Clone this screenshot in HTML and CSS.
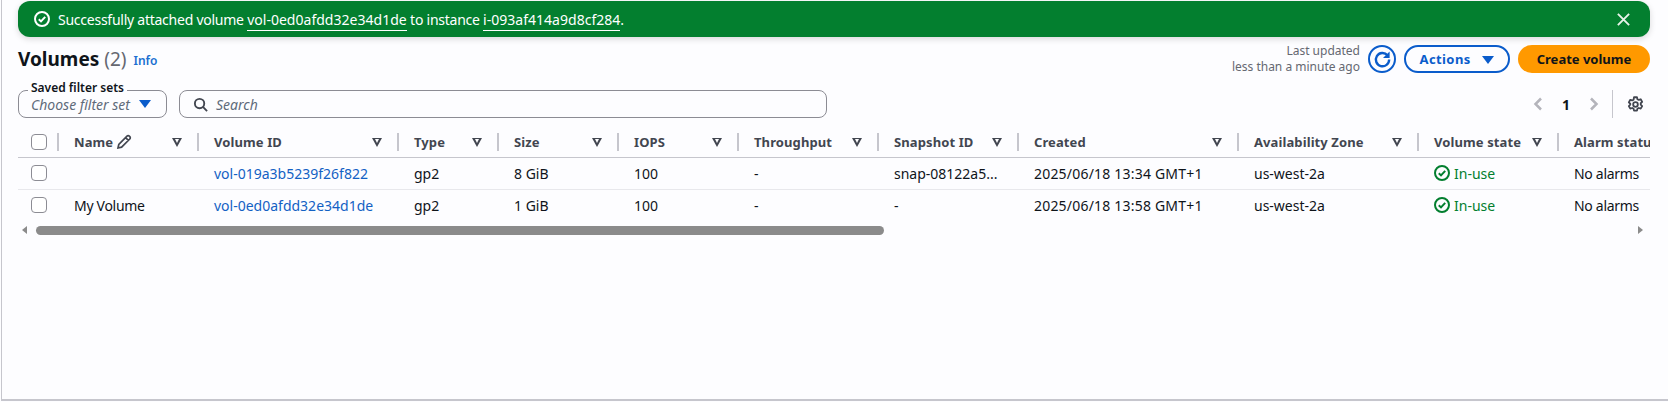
FILE: index.html
```html
<!DOCTYPE html>
<html lang="en">

<head>
    <meta charset="UTF-8">
    <meta name="viewport" content="width=device-width, initial-scale=1.0">
    <title>Volumes</title>
    <link rel="stylesheet" href="styles.css">
</head>

<body>
    <div class="page">
        <!-- Flash message -->
        <div class="flash">
            <svg class="flash-icon" viewBox="0 0 16 16"><circle cx="8" cy="8" r="7"/><path d="M4.8 8.2l2.2 2.2 4.2-4.6"/></svg>
            <span class="flash-text">Successfully attached volume <a class="flash-link">vol-0ed0afdd32e34d1de</a> to instance <a class="flash-link">i-093af414a9d8cf284</a>.</span>
            <svg class="flash-close" viewBox="0 0 16 16"><path d="M2 2l12 12M14 2L2 14"/></svg>
        </div>

        <!-- Header -->
        <div class="header">
            <div class="title">
                <h1>Volumes <span class="count">(2)</span></h1>
                <a class="info">Info</a>
            </div>
            <div class="actions">
                <div class="updated">Last updated<br>less than a minute ago</div>
                <button class="btn-refresh">
                    <svg viewBox="0 0 16 16"><path d="M12.2 4.4A5.6 5.6 0 1 0 13.6 8"/><path class="fill" d="M14 1.2v5.6H8.4z"/></svg>
                </button>
                <button class="btn-actions">Actions <span class="caret"></span></button>
                <button class="btn-create">Create volume</button>
            </div>
        </div>

        <!-- Filter -->
        <div class="filters">
            <div class="select">
                <span class="select-label">Saved filter sets</span>
                <span>Choose filter set</span>
                <span class="caret"></span>
            </div>
            <div class="search">
                <svg viewBox="0 0 16 16"><circle cx="7" cy="7" r="5"/><path d="M10.6 10.6L15 15"/></svg>
                <span>Search</span>
            </div>
            <div class="pager">
                <svg viewBox="0 0 16 16"><path d="M11 2.5L5.5 8l5.5 5.5"/></svg>
                <b>1</b>
                <svg viewBox="0 0 16 16"><path d="M5 2.5L10.5 8 5 13.500"/></svg>
                <span class="pager-line"></span>
                <svg class="gear" viewBox="0 0 16 16"><path d="M6.600 1.200h2.800l.4 1.800 1.300.7 1.800-.6 1.400 2.400-1.400 1.300v1.400l1.400 1.300-1.400 2.400-1.800-.6-1.300.7-.4 1.800H6.600l-.4-1.800-1.300-.7-1.800.6-1.400-2.400 1.400-1.300V7.300L1.700 6l1.400-2.400 1.800.6 1.300-.7z"/><circle cx="8" cy="8" r="2.200"/></svg>
            </div>
        </div>

        <!-- Table -->
        <div class="table-wrap">
            <table>
                <thead>
                    <tr>
                        <th class="col-check"><span class="check"></span></th>
                        <th class="col-name"><div class="th">Name <svg class="pencil" viewBox="0 0 16 16"><path d="M2 14l.8-3.600L11 2.200a1.600 1.600 0 0 1 2.300 0l.5.500a1.600 1.600 0 0 1 0 2.300L5.600 13.200z M9.600 3.600l2.800 2.800"/></svg><i class="sort"></i></div></th>
                        <th class="col-id"><div class="th">Volume ID<i class="sort"></i></div></th>
                        <th class="col-type"><div class="th">Type<i class="sort"></i></div></th>
                        <th class="col-size"><div class="th">Size<i class="sort"></i></div></th>
                        <th class="col-iops"><div class="th">IOPS<i class="sort"></i></div></th>
                        <th class="col-through"><div class="th">Throughput<i class="sort"></i></div></th>
                        <th class="col-snap"><div class="th">Snapshot ID<i class="sort"></i></div></th>
                        <th class="col-created"><div class="th">Created<i class="sort"></i></div></th>
                        <th class="col-zone"><div class="th">Availability Zone<i class="sort"></i></div></th>
                        <th class="col-state"><div class="th">Volume state<i class="sort"></i></div></th>
                        <th class="col-alarm"><div class="th">Alarm status</div></th>
                    </tr>
                </thead>
                <tbody>
                    <tr>
                        <td class="col-check"><span class="check"></span></td>
                        <td></td>
                        <td><a class="link">vol-019a3b5239f26f822</a></td>
                        <td>gp2</td>
                        <td>8 GiB</td>
                        <td>100</td>
                        <td>-</td>
                        <td>snap-08122a5...</td>
                        <td class="date">2025/06/18 13:34 GMT+1</td>
                        <td>us-west-2a</td>
                        <td><span class="state"><svg viewBox="0 0 16 16"><circle cx="8" cy="8" r="7"/><path d="M4.8 8.2l2.2 2.2 4.2-4.6"/></svg>In-use</span></td>
                        <td class="words">No alarms</td>
                    </tr>
                    <tr>
                        <td class="col-check"><span class="check"></span></td>
                        <td class="words">My Volume</td>
                        <td><a class="link">vol-0ed0afdd32e34d1de</a></td>
                        <td>gp2</td>
                        <td>1 GiB</td>
                        <td>100</td>
                        <td>-</td>
                        <td>-</td>
                        <td class="date">2025/06/18 13:58 GMT+1</td>
                        <td>us-west-2a</td>
                        <td><span class="state"><svg viewBox="0 0 16 16"><circle cx="8" cy="8" r="7"/><path d="M4.8 8.2l2.2 2.2 4.2-4.6"/></svg>In-use</span></td>
                        <td class="words">No alarms</td>
                    </tr>
                </tbody>
            </table>
        </div>

        <!-- Scrollbar -->
        <div class="scrollbar">
            <span class="arrow-left"></span>
            <div class="track"><div class="thumb"></div></div>
            <span class="arrow-right"></span>
        </div>
    </div>
</body>

</html>
```

FILE: styles.css
```css
* {
    margin: 0;
    padding: 0;
    box-sizing: border-box;
}

html, body {
    height: 100%;
    overflow: hidden;
    font-family: "Noto Sans", Arial, sans-serif;
    font-size: 14px;
    color: #0f141a;
    background: #fdfdff;
}

svg {
    fill: none;
    stroke: currentColor;
    stroke-width: 2;
    flex: none;
}

.page {
    height: 401px;
    margin-left: 1px;
    padding: 1px 18px 0 16px;
    border-left: 1px solid #c6c6cd;
    border-bottom: 2px solid #c6c6cd;
}

/* Flash message */
.flash {
    display: flex;
    align-items: center;
    height: 36px;
    padding: 0 19px 0 16px;
    border-radius: 12px;
    background: #037f2f;
    color: #fff;
    box-shadow: 0 2px 6px rgba(0, 0, 0, 0.15);
}

.flash-icon {
    width: 16px;
    height: 16px;
    margin-right: 8px;
}

.flash-text {
    flex: 1;
    letter-spacing: -0.25px;
}

.flash-link {
    padding-bottom: 1px;
    border-bottom: 1px solid #fff;
    letter-spacing: 0.02px;
}

.flash-close {
    width: 15px;
    height: 15px;
    color: #e8f3ea;
}

/* Header */
.header {
    display: flex;
    justify-content: space-between;
    height: 28px;
    margin-top: 8px;
}

.title {
    display: flex;
    align-items: center;
    gap: 7px;
}

h1 {
    font-size: 19px;
    font-weight: 700;
    line-height: 28px;
}

.count {
    font-weight: 400;
    color: #656871;
}

.info {
    margin-top: 3px;
    font-size: 12px;
    font-weight: 600;
    color: #1a6fd1;
}

.actions {
    display: flex;
    align-items: center;
    gap: 8px;
}

.updated {
    font-size: 12px;
    line-height: 16px;
    text-align: right;
    color: #656871;
}

button {
    height: 28px;
    border-radius: 14px;
    font-family: inherit;
    font-size: 13px;
    font-weight: 700;
}

.btn-refresh {
    width: 28px;
    border: 2px solid #0a5ccb;
    background: none;
    color: #0a5ccb;
    display: flex;
    align-items: center;
    justify-content: center;
}

.btn-refresh svg {
    width: 19px;
    height: 19px;
}

.btn-refresh .fill {
    fill: currentColor;
    stroke: none;
}

.btn-actions {
    width: 106px;
    border: 2px solid #0a5ccb;
    background: none;
    color: #0a5ccb;
    letter-spacing: 0.4px;
}

.btn-actions .caret {
    margin-left: 8px;
}

.btn-create {
    width: 132px;
    border: 0;
    background: #ff9900;
    color: #0f141a;
}

.caret {
    display: inline-block;
    width: 0;
    height: 0;
    border-left: 6px solid transparent;
    border-right: 6px solid transparent;
    border-top: 8px solid #0a5ccb;
}

/* Filter */
.filters {
    display: flex;
    align-items: center;
    height: 28px;
    margin-top: 17px;
}

.select {
    position: relative;
    display: flex;
    align-items: center;
    justify-content: space-between;
    width: 149px;
    height: 28px;
    padding: 0 15px 0 12px;
    border: 1px solid #8c8c94;
    border-radius: 8px;
    font-style: italic;
    color: #5f6b7a;
}

.select-label {
    position: absolute;
    top: -11px;
    left: 9px;
    padding: 0 3px;
    background: #fdfdff;
    font-size: 12px;
    font-style: normal;
    font-weight: 600;
    line-height: 16px;
    color: #0f141a;
}

.search {
    display: flex;
    align-items: center;
    gap: 8px;
    width: 648px;
    height: 28px;
    margin-left: 12px;
    padding-left: 13px;
    border: 1px solid #8c8c94;
    border-radius: 8px;
    font-style: italic;
    color: #5f6b7a;
}

.search svg {
    width: 15px;
    height: 15px;
    color: #424650;
}

.pager {
    display: flex;
    align-items: center;
    height: 28px;
    margin-left: auto;
    color: #b4b4bb;
}

.pager svg {
    width: 16px;
    height: 16px;
    stroke-width: 2.500;
}

.pager b {
    margin: 0 16px;
    font-size: 14px;
    color: #0f141a;
}

.pager-line {
    width: 1px;
    height: 28px;
    margin: 0 14px 0 10px;
    background: #c6c6cd;
}

.pager .gear {
    width: 17px;
    height: 17px;
    margin-right: 6px;
    stroke-width: 1.700;
    stroke-linejoin: round;
    color: #424650;
}

/* Table */
.table-wrap {
    overflow: hidden;
    margin-top: 9px;
}

table {
    width: 1680px;
    table-layout: fixed;
    border-collapse: collapse;
}

th {
    height: 30px;
    padding: 0;
    border-bottom: 1px solid #c6c6cd;
    text-align: left;
    font-size: 13px;
    font-weight: 700;
    letter-spacing: 0.1px;
    color: #424650;
}

td {
    height: 32px;
    padding: 0 0 0 17px;
    white-space: nowrap;
}

tbody tr:first-child td {
    border-bottom: 1px solid #e8e8ec;
}

td.col-check, th.col-check {
    width: 39px;
    padding-left: 13px;
}

.col-name { width: 140px; }
.col-id { width: 200px; }
.col-type { width: 100px; }
.col-size { width: 120px; }
.col-iops { width: 120px; }
.col-through { width: 140px; }
.col-snap { width: 140px; }
.col-created { width: 220px; }
.col-zone { width: 180px; }
.col-state { width: 140px; }
.col-alarm { width: 141px; }

.words {
    letter-spacing: -0.3px;
}

.date {
    letter-spacing: 0.2px;
}

.th {
    position: relative;
    display: flex;
    align-items: center;
    height: 18px;
    padding-left: 15px;
    border-left: 2px solid #c6c6cd;
    white-space: nowrap;
}

.pencil {
    width: 16px;
    height: 16px;
    margin-left: 3px;
    stroke-width: 1.700;
}

/* Sort icon: outlined triangle */
.sort {
    position: absolute;
    top: 5px;
    right: 15px;
    width: 0;
    height: 0;
    border-left: 5.500px solid transparent;
    border-right: 5.500px solid transparent;
    border-top: 9px solid #424650;
}

.sort::after {
    content: "";
    position: absolute;
    top: -7.500px;
    left: -2.500px;
    border-left: 2.500px solid transparent;
    border-right: 2.500px solid transparent;
    border-top: 4px solid #fdfdff;
}

.check {
    display: block;
    width: 16px;
    height: 16px;
    border: 1px solid #8c8c94;
    border-radius: 4px;
    background: #fff;
}

.link {
    color: #1361c4;
}

.state {
    display: flex;
    align-items: center;
    gap: 4px;
    color: #037f2f;
}

.state svg {
    width: 16px;
    height: 16px;
}

/* Scrollbar */
.scrollbar {
    display: flex;
    align-items: center;
    height: 12px;
    margin-top: 3px;
}

.track {
    flex: 1;
    padding: 0 0 0 9px;
}

.thumb {
    width: 848px;
    height: 9px;
    border-radius: 5px;
    background: #8b8b8b;
}

.arrow-left {
    margin-left: 4px;
    border-top: 4px solid transparent;
    border-bottom: 4px solid transparent;
    border-right: 5px solid #8b8b8b;
}

.arrow-right {
    margin-right: 7px;
    border-top: 4px solid transparent;
    border-bottom: 4px solid transparent;
    border-left: 5px solid #8b8b8b;
}
```
